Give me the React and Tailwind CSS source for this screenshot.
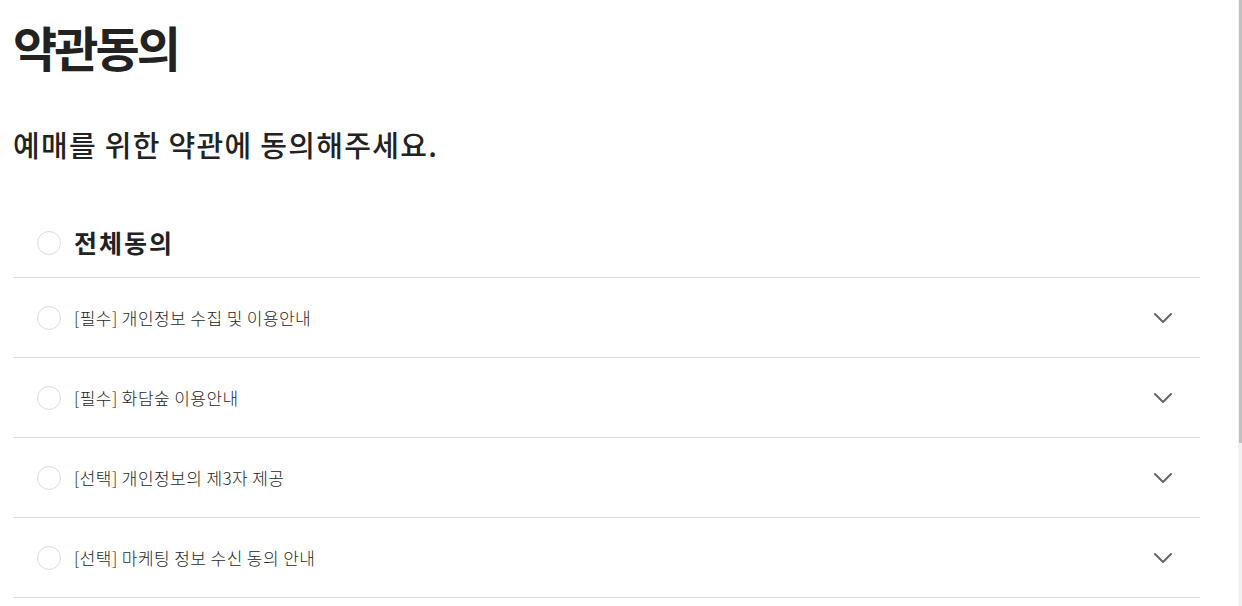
const terms = [
  '[필수] 개인정보 수집 및 이용안내',
  '[필수] 화담숲 이용안내',
  '[선택] 개인정보의 제3자 제공',
  '[선택] 마케팅 정보 수신 동의 안내',
]

function Circle() {
  return <span className="block w-[24px] h-[24px] rounded-full border border-[#dcdcdc] bg-white shrink-0" />
}

function Chevron() {
  return (
    <svg width="18" height="10" viewBox="0 0 18 10" fill="none" className="shrink-0">
      <polyline points="1,1 9,9 17,1" stroke="#666" strokeWidth="2" strokeLinecap="round" strokeLinejoin="round" />
    </svg>
  )
}

export default function App() {
  return (
    <div
      className="flex h-[606px] overflow-hidden bg-white text-[#222]"
      style={{ fontFamily: '"Noto Sans CJK KR", "Noto Sans", sans-serif' }}
    >
      <div className="flex-1 pl-[13px]">
        <div className="w-[1187px]">
          {/* title */}
          <h1 className="pt-[16px] text-[48px] leading-[60px] font-bold tracking-[-0.06em]">약관동의</h1>
          <h2 className="mt-[50px] text-[29px] leading-[36px] font-medium tracking-[0.045em]">
            예매를 위한 약관에 동의해주세요.
          </h2>

          <div className="mt-[46px]">
            {/* agree all */}
            <div className="flex items-center gap-[13px] h-[70px] pl-[24px] border-b border-[#dcdcdc]">
              <Circle />
              <span className="text-[25px] font-bold tracking-[0.08em]">전체동의</span>
            </div>

            {terms.map((t) => (
              <div key={t} className="flex items-center h-[80px] pl-[24px] pr-[28px] border-b border-[#dcdcdc]">
                <Circle />
                <span className="ml-[13px] flex-1 text-[17px] font-light text-[#1f1f1f] tracking-[0.025em]">{t}</span>
                <Chevron />
              </div>
            ))}
          </div>
        </div>
      </div>
      {/* scrollbar */}
      <div className="w-[4px] bg-[#f1f1f1] flex justify-end">
        <div className="w-[3px] h-[443px] bg-[#c1c1c1]" />
      </div>
    </div>
  )
}
